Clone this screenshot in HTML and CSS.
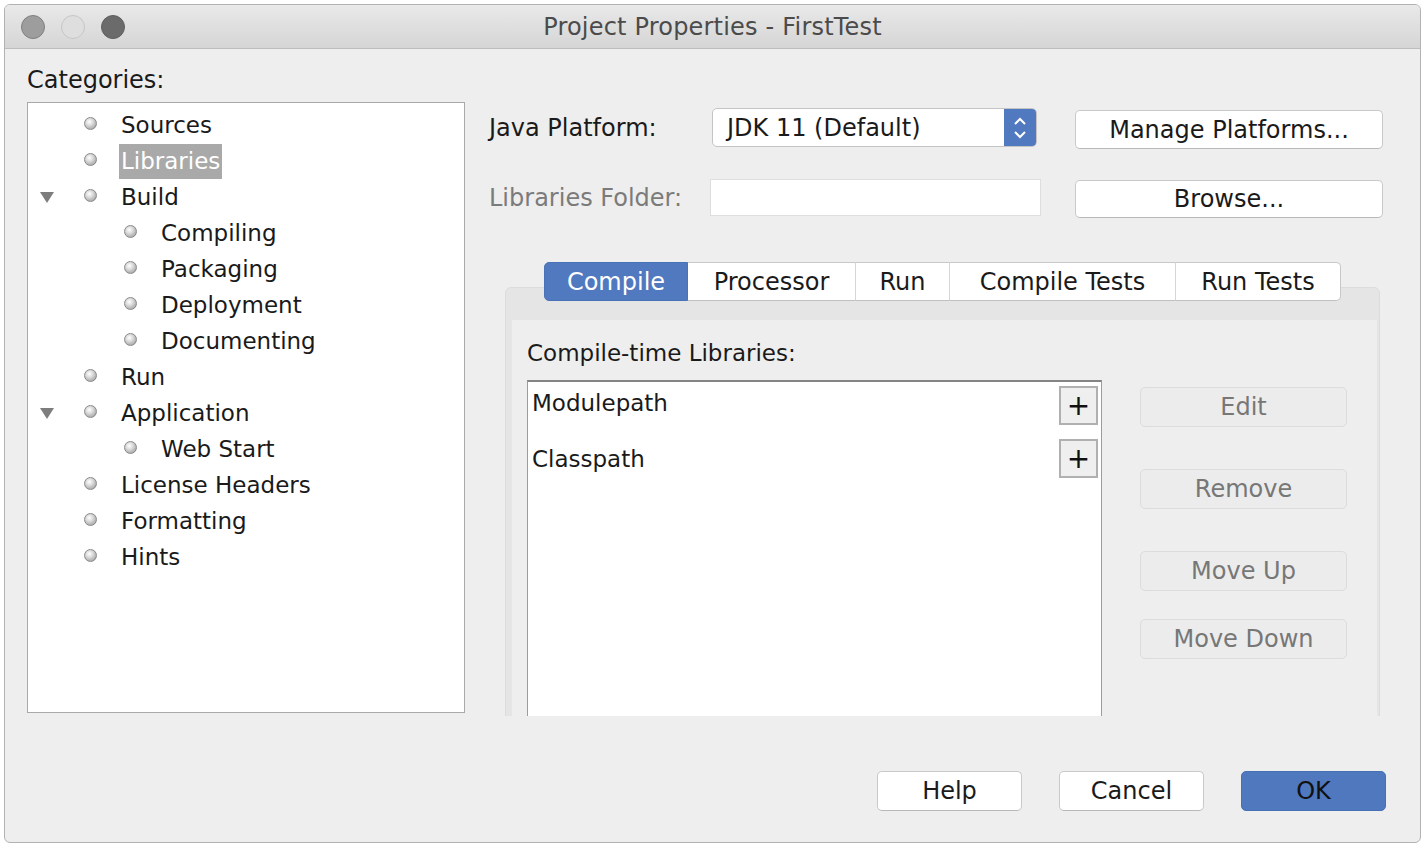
FILE: index.html
```html
<!DOCTYPE html>
<html>
<head>
<meta charset="utf-8">
<title>Project Properties - FirstTest</title>
<link rel="stylesheet" href="styles.css">
</head>
<body>
<div class="window">
  <div class="titlebar">
    <div class="lights">
      <span class="light tl-close"></span><span class="light tl-min"></span><span class="light tl-max"></span>
    </div>
    <div class="title">Project Properties - FirstTest</div>
    <div></div>
  </div>
  <div class="body">
    <div class="main">
      <div class="left">
        <div class="cat-label">Categories:</div>
        <div class="tree">
          <div class="node"><span class="twisty"></span><span class="bullet"></span><span class="label">Sources</span></div>
          <div class="node"><span class="twisty"></span><span class="bullet"></span><span class="label sel">Libraries</span></div>
          <div class="node"><span class="twisty"><svg width="14" height="11" viewBox="0 0 14 11"><polygon points="0,0 14,0 7,11" fill="#7d7d7d"/></svg></span><span class="bullet"></span><span class="label">Build</span></div>
          <div class="node child"><span class="bullet"></span><span class="label">Compiling</span></div>
          <div class="node child"><span class="bullet"></span><span class="label">Packaging</span></div>
          <div class="node child"><span class="bullet"></span><span class="label">Deployment</span></div>
          <div class="node child"><span class="bullet"></span><span class="label">Documenting</span></div>
          <div class="node"><span class="twisty"></span><span class="bullet"></span><span class="label">Run</span></div>
          <div class="node"><span class="twisty"><svg width="14" height="11" viewBox="0 0 14 11"><polygon points="0,0 14,0 7,11" fill="#7d7d7d"/></svg></span><span class="bullet"></span><span class="label">Application</span></div>
          <div class="node child"><span class="bullet"></span><span class="label">Web Start</span></div>
          <div class="node"><span class="twisty"></span><span class="bullet"></span><span class="label">License Headers</span></div>
          <div class="node"><span class="twisty"></span><span class="bullet"></span><span class="label">Formatting</span></div>
          <div class="node"><span class="twisty"></span><span class="bullet"></span><span class="label">Hints</span></div>
        </div>
      </div>
      <div class="right">
        <div class="row row1">
          <div class="field-label">Java Platform:</div>
          <div class="combo">
            <span class="combo-text">JDK 11 (Default)</span>
            <span class="combo-arrows"><svg width="14" height="24" viewBox="0 0 14 24"><polyline points="2,8 7,3 12,8" fill="none" stroke="#fff" stroke-width="2"/><polyline points="2,16 7,21 12,16" fill="none" stroke="#fff" stroke-width="2"/></svg></span>
          </div>
          <button class="btn btn-wide">Manage Platforms...</button>
        </div>
        <div class="row row2">
          <div class="field-label disabled">Libraries Folder:</div>
          <div class="textfield"></div>
          <button class="btn btn-wide btn-browse">Browse...</button>
        </div>
        <div class="tabbed">
          <div class="tabs">
            <span class="tab active t-compile">Compile</span>
            <span class="tab t-proc">Processor</span>
            <span class="tab t-run">Run</span>
            <span class="tab t-ctests">Compile Tests</span>
            <span class="tab t-rtests">Run Tests</span>
          </div>
          <div class="panel">
            <div class="panel-inner">
              <div class="list-label">Compile-time Libraries:</div>
              <div class="list-area">
                <div class="list">
                  <div class="list-row"><span>Modulepath</span><span class="plus">+</span></div>
                  <div class="list-row"><span>Classpath</span><span class="plus">+</span></div>
                </div>
                <div class="side-buttons">
                  <button class="btn-dis b-edit">Edit</button>
                  <button class="btn-dis b-remove">Remove</button>
                  <button class="btn-dis b-up">Move Up</button>
                  <button class="btn-dis b-down">Move Down</button>
                </div>
              </div>
            </div>
          </div>
        </div>
      </div>
    </div>
    <div class="footer">
      <button class="btn btn-foot">Help</button>
      <button class="btn btn-foot">Cancel</button>
      <button class="btn btn-foot btn-ok">OK</button>
    </div>
  </div>
</div>
</body>
</html>
```

FILE: styles.css
```css
* { box-sizing: border-box; }
html, body { margin: 0; padding: 0; background: #ffffff; }
body {
  font-family: "DejaVu Sans", "Liberation Sans", sans-serif;
  font-size: 23px;
  color: #1a1a1a;
}
.window {
  margin: 4px 0 0 4px;
  width: 1417px;
  height: 839px;
  border: 1px solid #b2b2b2;
  border-radius: 6px;
  background: #eeeeee;
  overflow: hidden;
}
.titlebar {
  height: 44px;
  border-bottom: 1px solid #bdbdbd;
  background: linear-gradient(#e9e9e9, #d5d5d5);
  display: grid;
  grid-template-columns: 1fr auto 1fr;
  align-items: center;
}
.lights { display: flex; gap: 16px; padding-left: 16px; }
.light { width: 24px; height: 24px; border-radius: 50%; display: block; }
.tl-close { background: #9d9d9d; border: 1px solid #7f7f7f; }
.tl-min { background: #dedede; border: 1px solid #c6c6c6; }
.tl-max { background: #6b6b6b; border: 1px solid #5f5f5f; }
.title { font-size: 24px; color: #4b4b4b; letter-spacing: 0.2px; }

.main { display: flex; height: 667px; }
.left { width: 460px; padding-left: 22px; flex: none; }
.cat-label { margin-top: 17px; line-height: 28px; font-size: 24px; }
.tree {
  margin-top: 8px;
  width: 438px;
  height: 611px;
  background: #ffffff;
  border: 1px solid #a9a9a9;
  padding-top: 4px;
}
.node { display: flex; align-items: center; height: 36px; padding-left: 12px; }
.node.child { padding-left: 96px; }
.twisty { width: 14px; height: 11px; margin-right: 30px; display: flex; }
.bullet {
  width: 13px; height: 13px; border-radius: 50%;
  background: radial-gradient(circle at 40% 35%, #ffffff 0%, #dcdcdc 35%, #8f8f8f 100%);
  border: 1px solid #8a8a8a;
  margin-right: 24px;
  margin-top: -4px;
}
.label { line-height: 35px; white-space: nowrap; }
.label.sel { background: #a9a9a9; color: #ffffff; padding: 0 2px; margin-left: -2px; }

.right { width: 896px; margin-left: 24px; padding-top: 59px; flex: none; }
.row { display: flex; align-items: flex-start; }
.row1 { height: 41px; }
.row2 { height: 39px; margin-top: 30px; }
.field-label { line-height: 41px; white-space: nowrap; font-size: 24px; }
.row1 .field-label { width: 223px; }
.row2 .field-label { width: 221px; line-height: 39px; }
.field-label.disabled { color: #7b7b7b; }
.combo {
  width: 325px; height: 39px;
  background: #ffffff;
  border: 1px solid #c4c4c4;
  border-radius: 5px;
  display: flex; align-items: center; justify-content: space-between;
  overflow: hidden;
}
.combo-text { padding-left: 14px; font-size: 24px; }
.combo-arrows {
  width: 32px; height: 100%;
  background: #5079bf;
  display: flex; align-items: center; justify-content: center;
}
.textfield {
  width: 331px; height: 37px;
  background: #ffffff;
  border: 1px solid #dedede;
}
.btn {
  font-family: inherit;
  font-size: 24px;
  color: #1a1a1a;
  background: #ffffff;
  border: 1px solid #c9c9c9;
  border-bottom-color: #b8b8b8;
  border-radius: 5px;
  padding: 0;
}
.btn-wide { width: 308px; height: 39px; margin-left: auto; margin-right: 2px; margin-top: 2px; }
.btn-browse { height: 38px; margin-top: 1px; }

.tabbed { margin-top: 44px; margin-left: 16px; width: 875px; height: 454px; overflow: hidden; }
.tabs {
  position: relative; z-index: 1;
  display: flex; justify-content: center;
  height: 39px;
  margin-bottom: -14px;
}
.tab {
  height: 39px;
  background: #ffffff;
  border-top: 1px solid #c8c8c8;
  border-bottom: 1px solid #c0c0c0;
  border-right: 1px solid #d6d6d6;
  display: flex; align-items: center; justify-content: center;
  font-size: 24px;
  white-space: nowrap;
}
.tab:first-child { border-radius: 5px 0 0 5px; border-left: 1px solid #c8c8c8; }
.tab:last-child { border-radius: 0 5px 5px 0; border-right: 1px solid #c8c8c8; }
.tab.active { background: #5079bf; color: #ffffff; border-color: #4a72b6; }
.t-compile { width: 144px; }
.t-proc { width: 168px; }
.t-run { width: 94px; }
.t-ctests { width: 226px; }
.t-rtests { width: 165px; }
.panel {
  height: 600px;
  background: #e5e5e5;
  border: 1px solid #dcdcdc;
  border-radius: 6px;
  padding: 32px 2px 0 6px;
}
.panel-inner { background: #eeeeee; height: 100%; padding-left: 15px; }
.list-label { padding-top: 18px; line-height: 30px; }
.list-area { display: flex; align-items: flex-start; margin-top: 12px; }
.list {
  width: 575px; height: 500px;
  background: #ffffff;
  border-top: 2px solid #848484;
  border-left: 1px solid #9c9c9c;
  border-right: 1px solid #9c9c9c;
  padding: 4px 3px 0 4px;
  flex: none;
}
.list-row { display: flex; justify-content: space-between; align-items: center; height: 51px; }
.list-row:first-child { height: 47px; align-items: flex-start; }
.list-row:first-child span:first-child { margin-top: 4px; }
.plus {
  width: 39px; height: 39px;
  background: #efefef;
  border: 2px solid #b0b0b0;
  display: flex; align-items: center; justify-content: center;
  font-size: 28px; line-height: 1;
  color: #111;
}
.side-buttons { margin-left: 38px; margin-top: 7px; display: flex; flex-direction: column; }
.btn-dis {
  width: 207px; height: 40px;
  font-family: inherit; font-size: 24px;
  color: #777777;
  background: #ececec;
  border: 1px solid #dcdcdc;
  border-radius: 5px;
  padding: 0;
}
.b-remove, .b-up { margin-top: 42px; }
.b-down { margin-top: 28px; }

.footer { display: flex; justify-content: flex-end; gap: 37px; padding-right: 34px; margin-top: 55px; }
.btn-foot { width: 145px; height: 40px; }
.btn-ok { background: #4f78bf; border-color: #4870b5; color: #111; }
```
